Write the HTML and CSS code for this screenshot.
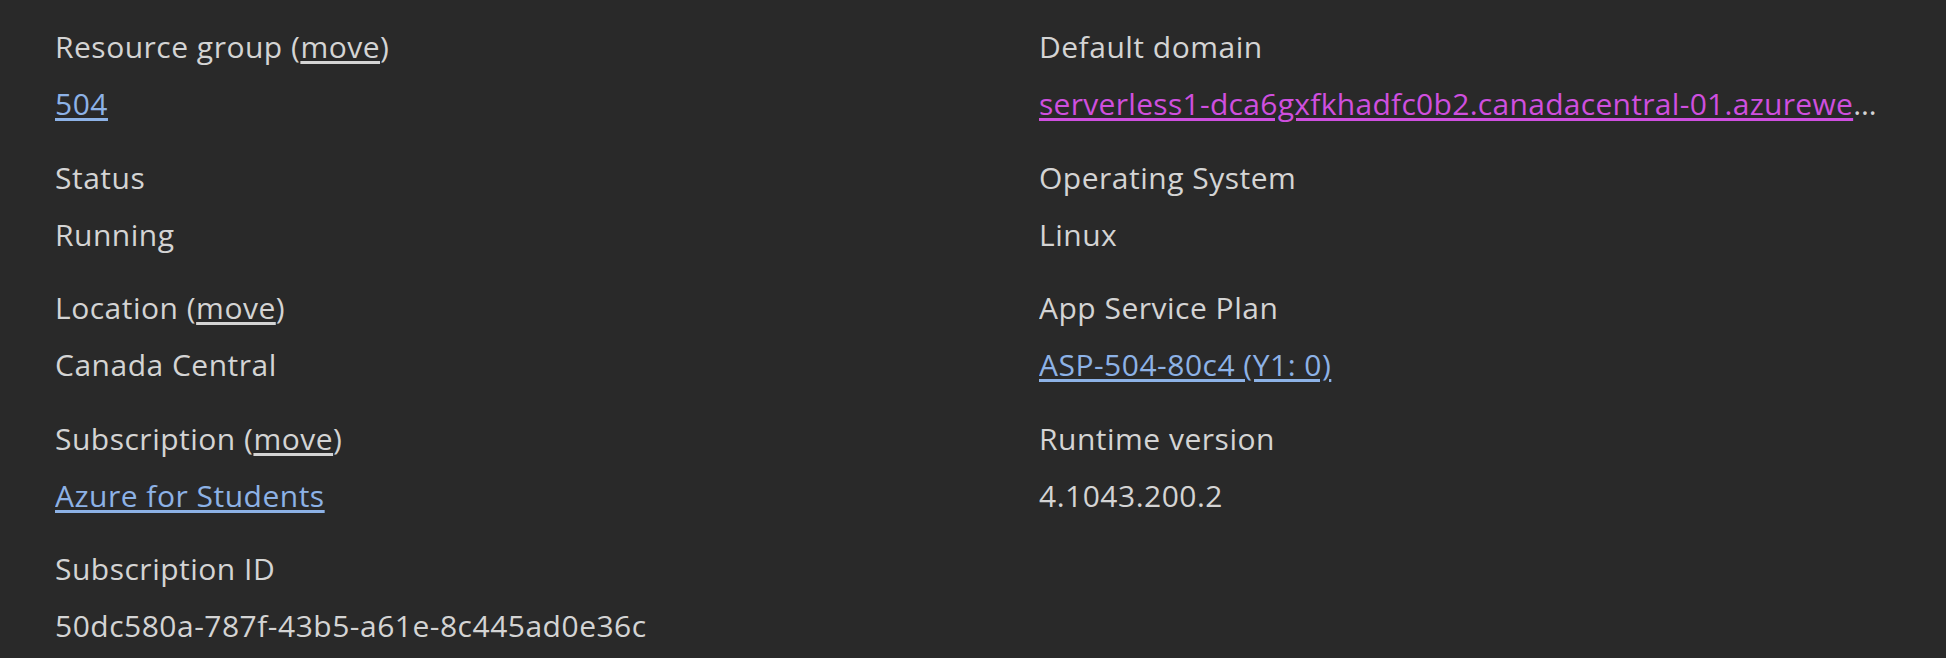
FILE: index.html
```html
<!DOCTYPE html>
<html lang="en">
<head>
<meta charset="utf-8">
<title>Function App Overview</title>
<link rel="stylesheet" href="styles.css">
</head>
<body>
<div class="essentials">
  <div class="col">
    <div class="field">
      <div class="label">Resource group (<a class="move" href="#">move</a>)</div>
      <div class="value"><a class="link" href="#">504</a></div>
    </div>
    <div class="field">
      <div class="label">Status</div>
      <div class="value">Running</div>
    </div>
    <div class="field">
      <div class="label">Location (<a class="move" href="#">move</a>)</div>
      <div class="value">Canada Central</div>
    </div>
    <div class="field">
      <div class="label">Subscription (<a class="move" href="#">move</a>)</div>
      <div class="value"><a class="link" href="#">Azure for Students</a></div>
    </div>
    <div class="field">
      <div class="label">Subscription ID</div>
      <div class="value">50dc580a-787f-43b5-a61e-8c445ad0e36c</div>
    </div>
  </div>
  <div class="col">
    <div class="field">
      <div class="label">Default domain</div>
      <div class="value domain"><a class="link visited" href="#">serverless1-dca6gxfkhadfc0b2.canadacentral-01.azurewebsites.net</a></div>
    </div>
    <div class="field">
      <div class="label">Operating System</div>
      <div class="value">Linux</div>
    </div>
    <div class="field">
      <div class="label">App Service Plan</div>
      <div class="value"><a class="link" href="#">ASP-504-80c4 (Y1: 0)</a></div>
    </div>
    <div class="field">
      <div class="label">Runtime version</div>
      <div class="value">4.1043.200.2</div>
    </div>
  </div>
</div>
</body>
</html>
```

FILE: styles.css
```css
html, body {
  margin: 0;
  padding: 0;
  background: #292929;
}

body {
  font-family: "Open Sans", "Noto Sans", sans-serif;
  font-size: 30px;
  color: #d4d4d4;
}

.essentials {
  display: grid;
  grid-template-columns: 840px 852px;
  column-gap: 144px;
  padding: 18px 55px 0 55px;
}

.col {
  display: flex;
  flex-direction: column;
  gap: 16.5px;
  min-width: 0;
}

.field {
  min-width: 0;
}

.label,
.value {
  line-height: 57px;
  height: 57px;
  white-space: nowrap;
  overflow: hidden;
  text-overflow: ellipsis;
  letter-spacing: 0.5px;
}

.value.domain {
  letter-spacing: 0.3px;
  width: 840px;
}

.move {
  color: #d4d4d4;
  text-decoration: underline;
  text-underline-offset: 3px;
}

.link {
  color: #8db2e6;
  text-decoration: underline;
  text-underline-offset: 3px;
}

.link.visited {
  color: #cf4fdf;
}
```
